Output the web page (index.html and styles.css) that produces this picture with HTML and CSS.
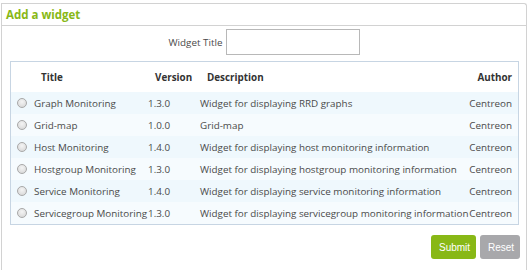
FILE: index.html
```html
<!DOCTYPE html>
<html lang="en">
<head>
    <meta charset="UTF-8">
    <title>Add a widget</title>
    <link rel="stylesheet" href="styles.css">
</head>
<body>

    <div class="panel">
        <div class="panel-title">Add a widget</div>

        <div class="title-row">
            <label for="widget-title">Widget Title</label>
            <input type="text" id="widget-title">
        </div>

        <div class="list-box">
            <table class="widget-list">
                <colgroup>
                    <col class="c-radio">
                    <col class="c-title">
                    <col class="c-version">
                    <col class="c-desc">
                    <col class="c-author">
                </colgroup>
                <thead>
                    <tr>
                        <th></th>
                        <th>Title</th>
                        <th>Version</th>
                        <th>Description</th>
                        <th class="author">Author</th>
                    </tr>
                </thead>
                <tbody>
                    <tr>
                        <td><span class="radio"></span></td>
                        <td>Graph Monitoring</td>
                        <td>1.3.0</td>
                        <td>Widget for displaying RRD graphs</td>
                        <td class="author">Centreon</td>
                    </tr>
                    <tr>
                        <td><span class="radio"></span></td>
                        <td>Grid-map</td>
                        <td>1.0.0</td>
                        <td>Grid-map</td>
                        <td class="author">Centreon</td>
                    </tr>
                    <tr>
                        <td><span class="radio"></span></td>
                        <td>Host Monitoring</td>
                        <td>1.4.0</td>
                        <td>Widget for displaying host monitoring information</td>
                        <td class="author">Centreon</td>
                    </tr>
                    <tr>
                        <td><span class="radio"></span></td>
                        <td>Hostgroup Monitoring</td>
                        <td>1.3.0</td>
                        <td>Widget for displaying hostgroup monitoring information</td>
                        <td class="author">Centreon</td>
                    </tr>
                    <tr>
                        <td><span class="radio"></span></td>
                        <td>Service Monitoring</td>
                        <td>1.4.0</td>
                        <td>Widget for displaying service monitoring information</td>
                        <td class="author">Centreon</td>
                    </tr>
                    <tr>
                        <td><span class="radio"></span></td>
                        <td>Servicegroup Monitoring</td>
                        <td>1.3.0</td>
                        <td>Widget for displaying servicegroup monitoring information</td>
                        <td class="author">Centreon</td>
                    </tr>
                </tbody>
            </table>
        </div>

        <div class="actions">
            <button class="btn submit">Submit</button>
            <button class="btn reset">Reset</button>
        </div>
    </div>

</body>
</html>
```

FILE: styles.css
```css
body {
    margin: 0;
    font-family: "Open Sans", "Liberation Sans", sans-serif;
    font-size: 9.85px;
    color: #4a4a4a;
    background-color: #ffffff;
}

.panel {
    margin: 3px 0 0 1px;
    width: 524px;
    height: 266px;
    border: 1px solid #d2d2d2;
    border-bottom: none;
    border-top-right-radius: 3px;
}

.panel-title {
    height: 21px;
    line-height: 22px;
    padding-left: 4px;
    font-size: 11.5px;
    font-weight: bold;
    color: #88b816;
    border-bottom: 1px solid #d2d2d2;
}

.title-row {
    display: flex;
    justify-content: center;
    align-items: center;
    gap: 4px;
    margin-top: 3px;
    padding-left: 1px;
}

.title-row input {
    box-sizing: border-box;
    width: 134px;
    height: 26px;
    margin: 0;
    border: 1px solid #b8b8b8;
    border-radius: 0;
    outline: none;
}

/* liste des widgets */
.list-box {
    margin: 6px 0 0 8px;
    width: 507px;
    border: 1px solid #c7d5e3;
}

.widget-list {
    width: 100%;
    border-collapse: collapse;
    table-layout: fixed;
}

.c-radio { width: 23px; }
.c-title { width: 114px; }
.c-version { width: 52px; }
.c-desc { width: 269px; }
.c-author { width: 49px; }

.widget-list th {
    height: 30px;
    padding: 0 0 0 7px;
    text-align: left;
    font-weight: bold;
    color: #333333;
    background-color: #ffffff;
}

.widget-list td {
    height: 22px;
    padding: 0;
    white-space: nowrap;
    overflow: visible;
}

.widget-list th.author,
.widget-list td.author {
    text-align: right;
    padding-right: 6px;
}

.widget-list tbody tr:nth-child(odd) {
    background-color: #eff8fd;
}

.widget-list tbody tr:nth-child(even) {
    background-color: #f6fbfe;
}

.radio {
    display: block;
    box-sizing: border-box;
    width: 10px;
    height: 10px;
    margin-left: 6px;
    border: 1px solid #a9a9a9;
    border-radius: 50%;
    background: radial-gradient(circle at 50% 35%, #f4f4f4, #d4d4d4);
}

.actions {
    display: flex;
    justify-content: flex-end;
    gap: 4px;
    margin: 10px 6px 0 0;
}

.btn {
    height: 24px;
    padding: 0 8px;
    border: none;
    border-radius: 3px;
    font-family: "Liberation Sans", Arial, sans-serif;
    font-size: 10px;
    color: #ffffff;
    cursor: pointer;
}

.btn.submit {
    width: 45px;
    background-color: #88b816;
}

.btn.reset {
    width: 40px;
    background-color: #a8a8ab;
}
```
